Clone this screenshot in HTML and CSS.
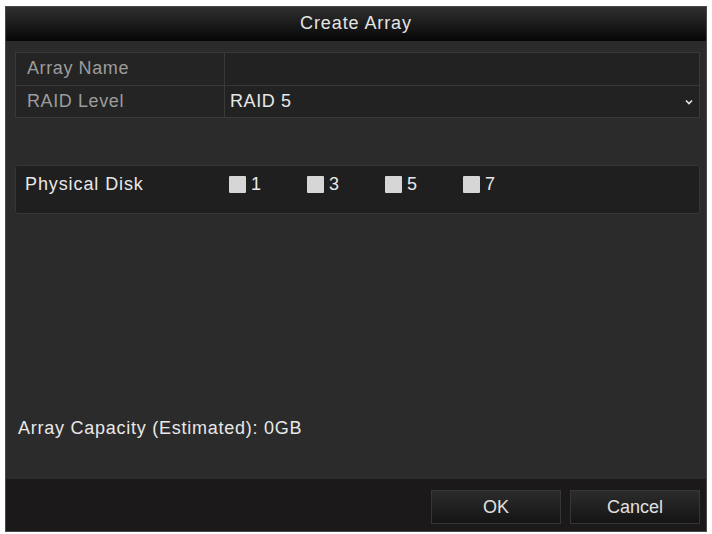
FILE: index.html
```html
<!DOCTYPE html>
<html>
<head>
    <meta charset="utf-8">
    <title>Create Array</title>
    <link rel="stylesheet" href="styles.css">
</head>
<body>
<div class="dialog">
    <div class="title">Create Array</div>
    <div class="main">
        <div class="form">
            <div class="row">
                <div class="label">Array Name</div>
                <div class="value"></div>
            </div>
            <div class="row">
                <div class="label">RAID Level</div>
                <div class="value select">
                    <span>RAID 5</span>
                    <svg class="arrow" width="8" height="6" viewBox="0 0 8 6">
                        <path d="M1 1.5 L4 4.5 L7 1.5" fill="none" stroke="#e6e6e6" stroke-width="1.6"/>
                    </svg>
                </div>
            </div>
        </div>
        <div class="disks">
            <div class="disks-label">Physical Disk</div>
            <div class="disk"><span class="check"></span>1</div>
            <div class="disk"><span class="check"></span>3</div>
            <div class="disk"><span class="check"></span>5</div>
            <div class="disk"><span class="check"></span>7</div>
        </div>
        <div class="capacity">Array Capacity (Estimated): 0GB</div>
    </div>
    <div class="footer">
        <button class="btn">OK</button>
        <button class="btn">Cancel</button>
    </div>
</div>
</body>
</html>
```

FILE: styles.css
```css
* {
    margin: 0;
    padding: 0;
    box-sizing: border-box;
}
body {
    background: #ffffff;
    font-family: "Liberation Sans", Arial, sans-serif;
    font-size: 18px;
    color: #e8e8e8;
}
.dialog {
    width: 702px;
    height: 526px;
    margin: 6px 0 0 5px;
    background: #2b2b2b;
    border: 1px solid #4a4a4a;
    display: flex;
    flex-direction: column;
}
.title {
    height: 34px;
    line-height: 33px;
    text-align: center;
    background: linear-gradient(#303030, #060606);
    color: #e4e4e4;
    letter-spacing: 0.9px;
}
.main {
    flex: 1;
    display: flex;
    flex-direction: column;
    padding: 11px 6px 40px 9px;
}
.form {
    border: 1px solid #393939;
}
.row {
    display: flex;
    height: 32px;
}
.row + .row {
    border-top: 1px solid #393939;
}
.label {
    width: 209px;
    padding-left: 11px;
    line-height: 31px;
    color: #9c9c9c;
    background: #242424;
    border-right: 1px solid #393939;
    letter-spacing: 0.6px;
}
.value {
    flex: 1;
    background: #222222;
    padding-left: 5px;
    line-height: 31px;
    letter-spacing: 0.6px;
}
.select {
    display: flex;
    justify-content: space-between;
    align-items: center;
    padding-right: 6px;
}
.disks {
    margin-top: 47px;
    height: 49px;
    display: flex;
    align-items: center;
    background: #1f1f1f;
    border: 1px solid #363636;
    border-radius: 3px;
    padding: 0 0 10px 9px;
}
.disks-label {
    width: 204px;
    letter-spacing: 0.9px;
}
.disk {
    width: 78px;
    display: flex;
    align-items: center;
    gap: 5px;
}
.check {
    width: 17px;
    height: 17px;
    background: #d6d6d6;
    border-radius: 1px;
}
.capacity {
    margin-top: auto;
    padding-left: 3px;
    letter-spacing: 0.75px;
}
.footer {
    height: 52px;
    background: #1b1919;
    display: flex;
    justify-content: flex-end;
    align-items: center;
    gap: 9px;
    padding: 4px 6px 0 0;
}
.btn {
    width: 130px;
    height: 34px;
    font-family: "Liberation Sans", Arial, sans-serif;
    font-size: 18px;
    color: #e0e0e0;
    background: linear-gradient(#2c2c2c, #141414);
    border: 1px solid #363636;
}
```
